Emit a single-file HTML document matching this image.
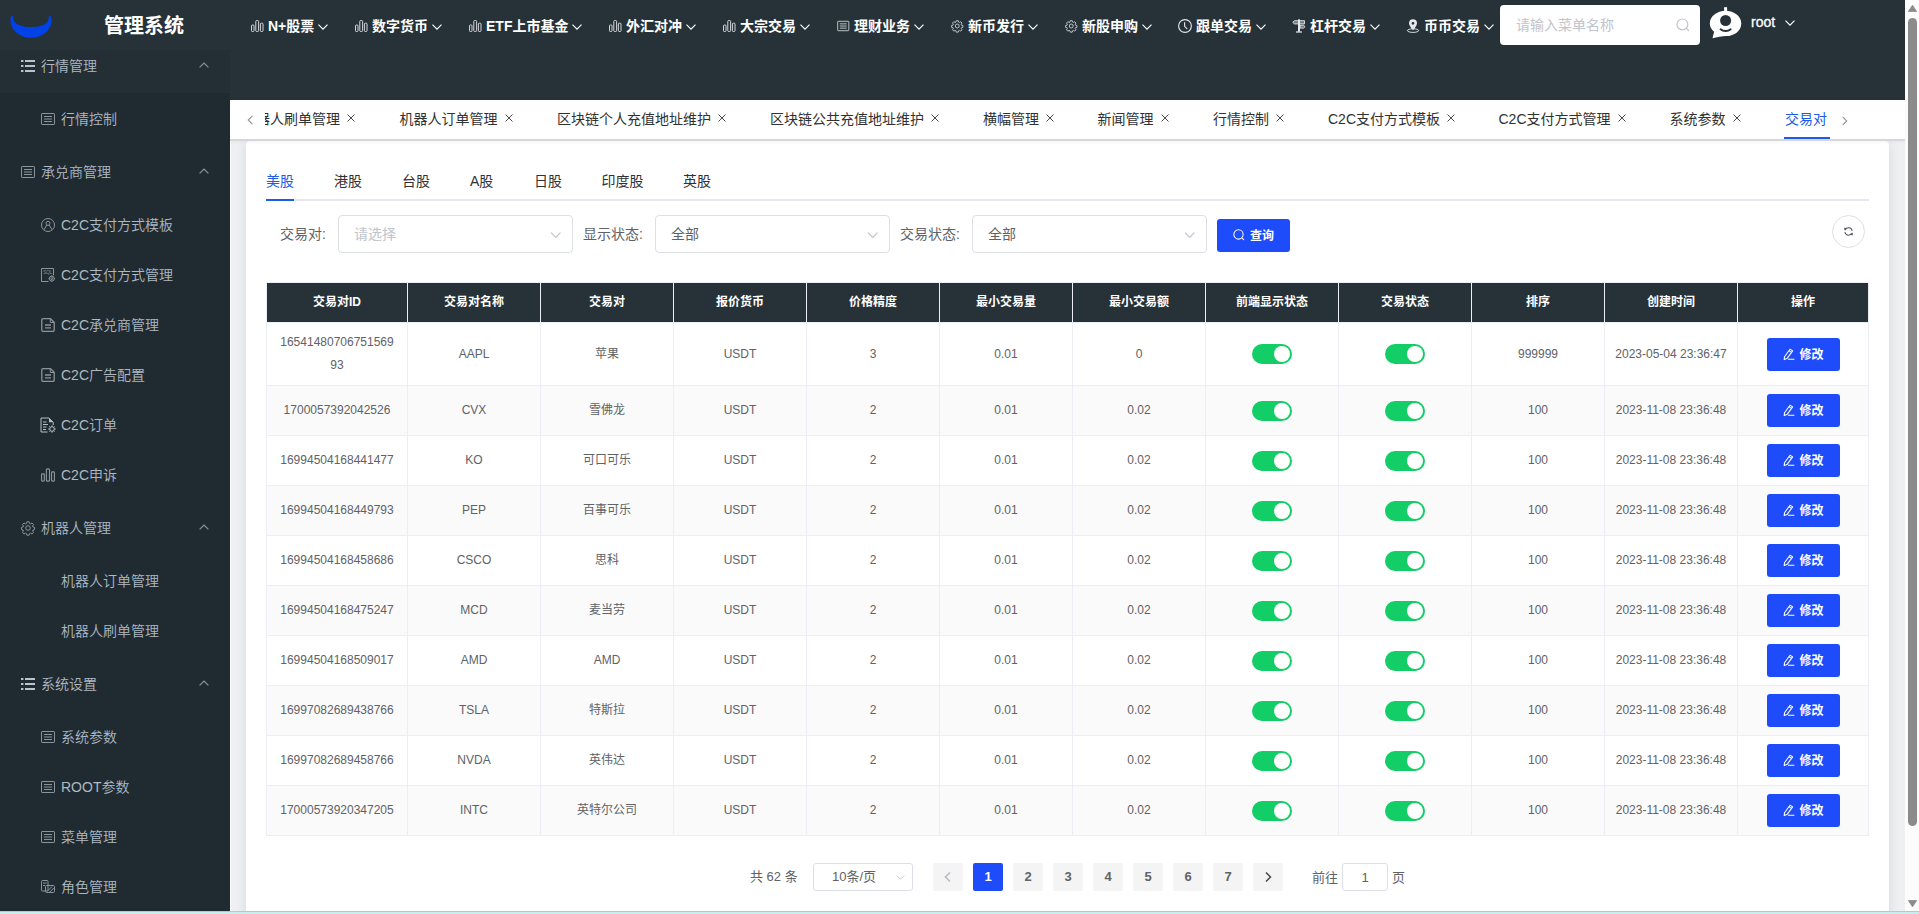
<!DOCTYPE html>
<html lang="zh-CN"><head><meta charset="utf-8"><title>管理系统</title>
<style>
*{box-sizing:border-box;margin:0;padding:0}
html,body{width:1919px;height:914px;overflow:hidden;background:#fff}
body{font-family:"Liberation Sans","Noto Sans CJK SC",sans-serif;font-size:14px;color:#606266;position:relative}
svg{display:block;overflow:visible}
.abs{position:absolute}
#hdr{position:absolute;left:0;top:0;width:1905px;height:100px;background:#263238}
#logo{position:absolute;left:0;top:0;width:230px;height:50px;background:#263238;z-index:5}
#logo .t{position:absolute;left:104px;top:12px;font-size:20px;font-weight:700;color:#fff;line-height:28px;white-space:nowrap}
.nav{position:absolute;top:0;height:52px;white-space:nowrap;color:#fff;font-size:14px;font-weight:700;line-height:52px}
.nav .ic{position:absolute;left:.5px;top:20px;width:12.500px;height:12px;color:#d4d8dc}
.nav .ic.big{left:0;top:19px;width:14px;height:14px;color:#e6e9ec}
.nav .tx{position:absolute;left:18px;top:0}
.nav .ar{display:inline-block;vertical-align:middle;margin-left:4px;width:10px;height:6px;margin-top:-1px}
#search{position:absolute;left:1500px;top:5px;width:200px;height:40px;background:#fff;border-radius:4px}
#search span{position:absolute;left:16px;top:0;line-height:40px;font-size:14px;color:#c0c4cc}
#side{position:absolute;left:0;top:50px;width:230px;height:861px;background:#202b31;overflow:hidden;font-weight:350}
#side .in{position:absolute;left:0;top:-12px;width:230px}
.grp{position:relative;width:230px;height:56px;color:#aeb9c4;font-size:14px;line-height:56px}
.grp .tx{position:absolute;left:41px;top:0;white-space:nowrap}
.grp .ic{position:absolute;left:21px;top:21px;width:14px;height:14px}
.grp .ar{position:absolute;left:199px;top:24px;width:10px;height:6px;color:#8a949c}
.itm{position:relative;width:230px;height:50px;color:#aeb9c4;font-size:14px;line-height:50px}
.itm .tx{position:absolute;left:61px;top:0;white-space:nowrap}
.itm .ic{position:absolute;left:41px;top:18px;width:14px;height:14px;color:#8a949c}
.itm .ic.big{left:40px;top:17px;width:16px;height:16px;color:#b4bec7}
#tabs{position:absolute;left:230px;top:100px;width:1675px;height:39px;background:#fff;box-shadow:0 2px 0 0 #d5d7db,0 4px 3px 0 rgba(0,0,0,.035);z-index:3}
#tabs .scroll{position:absolute;left:35px;top:0;width:1565px;height:39px;overflow:hidden}
.tab{position:absolute;top:0;height:39px;line-height:39px;font-size:14px;color:#303133;white-space:nowrap}
.tab .x{display:inline-block;vertical-align:middle;width:8px;height:8px;margin-left:7.300px;margin-top:-4px;color:#303133}
#main{position:absolute;left:231px;top:139px;width:1674px;height:772px;background:#eef0f2;overflow:hidden}
#card{position:absolute;left:15px;top:2px;width:1643px;height:800px;background:#fff;border-radius:4px;box-shadow:0 2px 12px 0 rgba(0,0,0,.1)}
.itab{position:absolute;top:20px;height:40px;line-height:40px;font-size:14px;color:#303133;white-space:nowrap}
.flabel{position:absolute;top:74px;height:38px;line-height:39px;font-size:14px;color:#606266;white-space:nowrap}
.sel{position:absolute;top:74px;width:235px;height:38px;border:1px solid #dcdfe6;border-radius:4px;background:#fff;font-size:14px;line-height:37px;padding-left:15px;color:#606266}
.sel .ar{position:absolute;right:11px;top:16px;width:11.500px;height:6.300px;color:#c0c4cc}
table{position:absolute;left:20px;top:141px;border-collapse:separate;border-spacing:0;table-layout:fixed;width:1602px;border-left:1px solid #ebeef5;border-top:1px solid #ebeef5;font-size:12px;color:#606266}
th{height:40px;background:#263238;color:#fff;font-weight:700;font-size:12px;text-align:center;border-right:1px solid #ebeef5;border-bottom:1px solid #ebeef5;line-height:23px;padding:0}
td{height:50px;text-align:center;border-right:1px solid #ebeef5;border-bottom:1px solid #ebeef5;line-height:23px;padding:0 10px;vertical-align:middle}
tr.r1 td{height:63px}
tr.s td{background:#fafafa}
.sw{display:inline-block;vertical-align:middle;width:40px;height:20px;border-radius:10px;background:#13ce66;position:relative}
.sw:after{content:"";position:absolute;left:22px;top:2px;width:16px;height:16px;border-radius:50%;background:#fff}
.btn{display:inline-block;vertical-align:middle;width:73px;height:33px;border-radius:3px;background:#1e4cfa;color:#fff;font-size:12px;font-weight:700;line-height:33px;text-align:left;position:relative;white-space:nowrap}
.btn svg{position:absolute;left:16px;top:10px;width:12px;height:12px}
.btn span{position:absolute;left:33px;top:1px}
.pg{position:absolute;top:722px;width:30px;height:28px;border-radius:2px;background:#f4f4f5;color:#606266;font-size:13px;font-weight:700;line-height:28px;text-align:center}
.pg svg{position:absolute;left:10px;top:8px;width:10px;height:12px}
.pt{position:absolute;top:722px;height:28px;line-height:28px;font-size:13px;color:#606266;white-space:nowrap}
</style></head>
<body>
<div id="hdr">
<div class="nav" style="left:250px"><svg class="ic" viewBox="0 0 12.5 12"><g fill="none" stroke="currentColor" stroke-width="1"><rect x=".5" y="5" width="2.500" height="6.500" rx=".8"/><rect x="4.800" y=".5" width="2.800" height="11" rx=".9"/><rect x="9.400" y="3.200" width="2.600" height="8.300" rx=".8"/></g></svg><span class="tx">N+股票<svg class="ar" viewBox="0 0 10 6"><path d="M.5 .6l4.500 4.500 4.500-4.500" fill="none" stroke="currentColor" stroke-width="1.150"/></svg></span></div>
<div class="nav" style="left:354px"><svg class="ic" viewBox="0 0 12.5 12"><g fill="none" stroke="currentColor" stroke-width="1"><rect x=".5" y="5" width="2.500" height="6.500" rx=".8"/><rect x="4.800" y=".5" width="2.800" height="11" rx=".9"/><rect x="9.400" y="3.200" width="2.600" height="8.300" rx=".8"/></g></svg><span class="tx">数字货币<svg class="ar" viewBox="0 0 10 6"><path d="M.5 .6l4.500 4.500 4.500-4.500" fill="none" stroke="currentColor" stroke-width="1.150"/></svg></span></div>
<div class="nav" style="left:468px"><svg class="ic" viewBox="0 0 12.5 12"><g fill="none" stroke="currentColor" stroke-width="1"><rect x=".5" y="5" width="2.500" height="6.500" rx=".8"/><rect x="4.800" y=".5" width="2.800" height="11" rx=".9"/><rect x="9.400" y="3.200" width="2.600" height="8.300" rx=".8"/></g></svg><span class="tx">ETF上市基金<svg class="ar" viewBox="0 0 10 6"><path d="M.5 .6l4.500 4.500 4.500-4.500" fill="none" stroke="currentColor" stroke-width="1.150"/></svg></span></div>
<div class="nav" style="left:608px"><svg class="ic" viewBox="0 0 12.5 12"><g fill="none" stroke="currentColor" stroke-width="1"><rect x=".5" y="5" width="2.500" height="6.500" rx=".8"/><rect x="4.800" y=".5" width="2.800" height="11" rx=".9"/><rect x="9.400" y="3.200" width="2.600" height="8.300" rx=".8"/></g></svg><span class="tx">外汇对冲<svg class="ar" viewBox="0 0 10 6"><path d="M.5 .6l4.500 4.500 4.500-4.500" fill="none" stroke="currentColor" stroke-width="1.150"/></svg></span></div>
<div class="nav" style="left:722px"><svg class="ic" viewBox="0 0 12.5 12"><g fill="none" stroke="currentColor" stroke-width="1"><rect x=".5" y="5" width="2.500" height="6.500" rx=".8"/><rect x="4.800" y=".5" width="2.800" height="11" rx=".9"/><rect x="9.400" y="3.200" width="2.600" height="8.300" rx=".8"/></g></svg><span class="tx">大宗交易<svg class="ar" viewBox="0 0 10 6"><path d="M.5 .6l4.500 4.500 4.500-4.500" fill="none" stroke="currentColor" stroke-width="1.150"/></svg></span></div>
<div class="nav" style="left:836px"><svg class="ic" viewBox="0 0 14 14"><g fill="none" stroke="currentColor" stroke-width="1"><rect x=".5" y="1.5" width="13" height="11" rx=".6"/><path d="M3 4.5h8M3 7h8M3 9.5h8"/></g></svg><span class="tx">理财业务<svg class="ar" viewBox="0 0 10 6"><path d="M.5 .6l4.500 4.500 4.500-4.500" fill="none" stroke="currentColor" stroke-width="1.150"/></svg></span></div>
<div class="nav" style="left:950px"><svg class="ic" viewBox="0 0 14 14"><g fill="none" stroke="currentColor" stroke-width="1"><circle cx="7" cy="7" r="2.3"/><path d="M5.9 .8h2.2l.4 1.6 1 .5 1.500-.9 1.500 1.600-.9 1.400.4 1 1.600.4v2.200l-1.600.4-.4 1 .9 1.400-1.500 1.600-1.500-.9-1 .5-.4 1.600h-2.200l-.4-1.600-1-.5-1.500.9-1.500-1.600.9-1.400-.4-1-1.600-.4v-2.200l1.600-.4.4-1-.9-1.400 1.500-1.600 1.500.9 1-.5z"/></g></svg><span class="tx">新币发行<svg class="ar" viewBox="0 0 10 6"><path d="M.5 .6l4.500 4.500 4.500-4.500" fill="none" stroke="currentColor" stroke-width="1.150"/></svg></span></div>
<div class="nav" style="left:1064px"><svg class="ic" viewBox="0 0 14 14"><g fill="none" stroke="currentColor" stroke-width="1"><circle cx="7" cy="7" r="2.3"/><path d="M5.9 .8h2.2l.4 1.6 1 .5 1.500-.9 1.500 1.600-.9 1.400.4 1 1.600.4v2.200l-1.600.4-.4 1 .9 1.400-1.500 1.600-1.500-.9-1 .5-.4 1.600h-2.200l-.4-1.600-1-.5-1.500.9-1.500-1.600.9-1.400-.4-1-1.600-.4v-2.200l1.600-.4.4-1-.9-1.400 1.500-1.600 1.500.9 1-.5z"/></g></svg><span class="tx">新股申购<svg class="ar" viewBox="0 0 10 6"><path d="M.5 .6l4.500 4.500 4.500-4.500" fill="none" stroke="currentColor" stroke-width="1.150"/></svg></span></div>
<div class="nav" style="left:1178px"><svg class="ic big" viewBox="0 0 14 14"><g fill="none" stroke="currentColor" stroke-width="1.1"><circle cx="7" cy="7" r="6.4"/><path d="M6.600 3.500v3.800l2.300 2.300" stroke-linecap="round"/></g></svg><span class="tx">跟单交易<svg class="ar" viewBox="0 0 10 6"><path d="M.5 .6l4.500 4.500 4.500-4.500" fill="none" stroke="currentColor" stroke-width="1.150"/></svg></span></div>
<div class="nav" style="left:1292px"><svg class="ic big" viewBox="0 0 14 14"><rect x="6" y=".3" width="2" height="12.400" fill="currentColor"/><path d="M4 13h6" stroke="currentColor" stroke-width="1.200" fill="none"/><path d="M2.500 1.700h10v3.200h-10l-1.800-1.600z" fill="currentColor" fill-opacity=".4" stroke="currentColor" stroke-width=".9"/><path d="M8 6.300h3.600l1.500 1.400-1.500 1.400h-3.600z" fill="currentColor" fill-opacity=".4" stroke="currentColor" stroke-width=".9"/></svg><span class="tx">杠杆交易<svg class="ar" viewBox="0 0 10 6"><path d="M.5 .6l4.500 4.500 4.500-4.500" fill="none" stroke="currentColor" stroke-width="1.150"/></svg></span></div>
<div class="nav" style="left:1406px"><svg class="ic big" viewBox="0 0 14 14"><path d="M7 .3a4 4 0 0 0-4 4c0 2.600 4 7 4 7s4-4.400 4-7a4 4 0 0 0-4-4zm0 2.600a1.400 1.400 0 1 1 0 2.800 1.400 1.400 0 0 1 0-2.800z" fill="currentColor" fill-rule="evenodd"/><ellipse cx="7" cy="11.600" rx="5.600" ry="1.800" fill="none" stroke="currentColor" stroke-width=".9"/></svg><span class="tx">币币交易<svg class="ar" viewBox="0 0 10 6"><path d="M.5 .6l4.500 4.500 4.500-4.500" fill="none" stroke="currentColor" stroke-width="1.150"/></svg></span></div>
<div id="search"><span>请输入菜单名称</span><svg style="position:absolute;left:176px;top:13px;width:14px;height:14px;color:#c0c4cc" viewBox="0 0 14 14"><g fill="none" stroke="currentColor" stroke-width="1.200"><circle cx="6.400" cy="6.400" r="5.400"/><path d="M10.300 10.300l2.200 2.200" stroke-linecap="round"/></g></svg></div>
<svg class="abs" style="left:1705px;top:4px;width:42px;height:38px" viewBox="0 0 42 38"><path d="M19.100 3.200h3v4.200h-3z" fill="#fff"/><path d="M20.600 6.800c8.700 0 15.700 5.600 15.700 12.600 0 7-6.600 12.500-15.200 12.700-3.700 .1-9.200 1.200-13.600 2.100l1.600-6.500c-2.700-2.200-4.300-5.100-4.300-8.300 0-7 7.100-12.600 15.800-12.600z" fill="#fff"/><circle cx="20.600" cy="16.500" r="5.500" fill="#263238"/><path d="M15.600 25.300c2.800 2.300 7.200 2.300 10 0" fill="none" stroke="#263238" stroke-width="2" stroke-linecap="round"/></svg>
<div class="abs" style="left:1751px;top:0;line-height:44px;font-size:14px;color:#fff;-webkit-text-stroke:.3px #fff">root</div>
<svg class="abs" style="left:1785px;top:20px;width:10px;height:6px;color:#fff" viewBox="0 0 10 6"><path d="M.5 .6l4.500 4.500 4.500-4.500" fill="none" stroke="currentColor" stroke-width="1.150"/></svg>
</div>
<div id="side"><div class="in">
<div class="grp" style="background:linear-gradient(#232e35,#232e35) no-repeat 0 0/100% 55px;"><svg class="ic" style="color:#b9c3cc" viewBox="0 0 14 14"><g fill="currentColor"><rect x="0" y="1" width="2.400" height="2"/><rect x="4" y="1" width="10" height="2"/><rect x="0" y="6" width="2.400" height="2"/><rect x="4" y="6" width="10" height="2"/><rect x="0" y="11" width="2.400" height="2"/><rect x="4" y="11" width="10" height="2"/></g></svg><span class="tx">行情管理</span><svg class="ar" viewBox="0 0 10 6"><path d="M.6 5.400l4.400-4.400 4.400 4.400" fill="none" stroke="currentColor" stroke-width="1.200"/></svg></div>
<div class="itm"><svg class="ic" viewBox="0 0 14 14"><g fill="none" stroke="currentColor" stroke-width="1"><rect x=".5" y="1.5" width="13" height="11" rx=".6"/><path d="M3 4.5h8M3 7h8M3 9.5h8"/></g></svg><span class="tx">行情控制</span></div>
<div class="grp" style=""><svg class="ic" style="color:#8a949c" viewBox="0 0 14 14"><g fill="none" stroke="currentColor" stroke-width="1"><rect x=".5" y="1.5" width="13" height="11" rx=".6"/><path d="M3 4.5h8M3 7h8M3 9.5h8"/></g></svg><span class="tx">承兑商管理</span><svg class="ar" viewBox="0 0 10 6"><path d="M.6 5.400l4.400-4.400 4.400 4.400" fill="none" stroke="currentColor" stroke-width="1.200"/></svg></div>
<div class="itm"><svg class="ic" viewBox="0 0 14 14"><g fill="none" stroke="currentColor" stroke-width="1"><circle cx="7" cy="7" r="6.500"/><circle cx="7" cy="5.300" r="2"/><path d="M3 11.800l2.800-4.800M11 11.800l-2.800-4.800"/></g></svg><span class="tx">C2C支付方式模板</span></div>
<div class="itm"><svg class="ic" viewBox="0 0 14 14"><g fill="none" stroke="currentColor" stroke-width="1"><path d="M7.500 13.500h-7v-13h12v6.800"/><circle cx="10.800" cy="10.600" r="2.500"/><circle cx="10.800" cy="10.600" r="1"/><path d="M10.800 7.300v1M10.800 12.900v1M7.500 10.600h1M13.100 10.600h1"/></g><text x="2.200" y="5.800" font-size="4.500" font-family="Liberation Sans,sans-serif" fill="currentColor">SQL</text></svg><span class="tx">C2C支付方式管理</span></div>
<div class="itm"><svg class="ic" viewBox="0 0 14 14"><g fill="none" stroke="currentColor" stroke-width="1.300"><path d="M9.500 .700h-7.500a1.200 1.200 0 0 0-1.200 1.200v10.200a1.200 1.200 0 0 0 1.200 1.200h10a1.200 1.200 0 0 0 1.200-1.200v-7.900z"/><path d="M9.300 .900v3.600h3.700" stroke-width="1"/><path d="M4 7h6M4 9.800h6"/></g></svg><span class="tx">C2C承兑商管理</span></div>
<div class="itm"><svg class="ic" viewBox="0 0 14 14"><g fill="none" stroke="currentColor" stroke-width="1.300"><path d="M9.500 .700h-7.500a1.200 1.200 0 0 0-1.200 1.200v10.200a1.200 1.200 0 0 0 1.200 1.200h10a1.200 1.200 0 0 0 1.200-1.200v-7.900z"/><path d="M9.300 .900v3.600h3.700" stroke-width="1"/><path d="M4 7h6M4 9.800h6"/></g></svg><span class="tx">C2C广告配置</span></div>
<div class="itm"><svg class="ic big" viewBox="0 0 16 16"><g fill="none" stroke="currentColor" stroke-width="1"><path d="M7.500 15h-6.500v-14h8l4.200 4.200v2.800"/><path d="M3 5h3.500M3 7.500h5M3 10h3.500M3 12.500h3"/><circle cx="12" cy="12" r="2.300"/><path d="M12 8.300v1.400M12 14.300v1.400M8.300 12h1.400M14.300 12h1.400M9.400 9.400l1 1M13.600 13.600l1 1M14.600 9.400l-1 1M10.400 13.600l-1 1"/></g><path d="M9 1l4.200 4.200h-4.200z" fill="currentColor"/></svg><span class="tx">C2C订单</span></div>
<div class="itm"><svg class="ic" viewBox="0 0 12.5 12"><g fill="none" stroke="currentColor" stroke-width="1"><rect x=".5" y="5" width="2.500" height="6.500" rx=".8"/><rect x="4.800" y=".5" width="2.800" height="11" rx=".9"/><rect x="9.400" y="3.200" width="2.600" height="8.300" rx=".8"/></g></svg><span class="tx">C2C申诉</span></div>
<div class="grp" style=""><svg class="ic" style="color:#8a949c" viewBox="0 0 14 14"><g fill="none" stroke="currentColor" stroke-width="1"><circle cx="7" cy="7" r="2.3"/><path d="M5.9 .8h2.2l.4 1.6 1 .5 1.500-.9 1.500 1.600-.9 1.400.4 1 1.600.4v2.200l-1.600.4-.4 1 .9 1.400-1.500 1.600-1.500-.9-1 .5-.4 1.600h-2.200l-.4-1.600-1-.5-1.500.9-1.500-1.600.9-1.400-.4-1-1.600-.4v-2.200l1.600-.4.4-1-.9-1.400 1.500-1.600 1.500.9 1-.5z"/></g></svg><span class="tx">机器人管理</span><svg class="ar" viewBox="0 0 10 6"><path d="M.6 5.400l4.400-4.400 4.400 4.400" fill="none" stroke="currentColor" stroke-width="1.200"/></svg></div>
<div class="itm"><span class="tx">机器人订单管理</span></div>
<div class="itm"><span class="tx">机器人刷单管理</span></div>
<div class="grp" style=""><svg class="ic" style="color:#b9c3cc" viewBox="0 0 14 14"><g fill="currentColor"><rect x="0" y="1" width="2.400" height="2"/><rect x="4" y="1" width="10" height="2"/><rect x="0" y="6" width="2.400" height="2"/><rect x="4" y="6" width="10" height="2"/><rect x="0" y="11" width="2.400" height="2"/><rect x="4" y="11" width="10" height="2"/></g></svg><span class="tx">系统设置</span><svg class="ar" viewBox="0 0 10 6"><path d="M.6 5.400l4.400-4.400 4.400 4.400" fill="none" stroke="currentColor" stroke-width="1.200"/></svg></div>
<div class="itm"><svg class="ic" viewBox="0 0 14 14"><g fill="none" stroke="currentColor" stroke-width="1"><rect x=".5" y="1.5" width="13" height="11" rx=".6"/><path d="M3 4.5h8M3 7h8M3 9.5h8"/></g></svg><span class="tx">系统参数</span></div>
<div class="itm"><svg class="ic" viewBox="0 0 14 14"><g fill="none" stroke="currentColor" stroke-width="1"><rect x=".5" y="1.5" width="13" height="11" rx=".6"/><path d="M3 4.5h8M3 7h8M3 9.5h8"/></g></svg><span class="tx">ROOT参数</span></div>
<div class="itm"><svg class="ic" viewBox="0 0 14 14"><g fill="none" stroke="currentColor" stroke-width="1"><rect x=".5" y="1.5" width="13" height="11" rx=".6"/><path d="M3 4.5h8M3 7h8M3 9.5h8"/></g></svg><span class="tx">菜单管理</span></div>
<div class="itm"><svg class="ic" viewBox="0 0 14 14"><g fill="none" stroke="currentColor" stroke-width="1"><rect x=".5" y=".5" width="6.500" height="10.500" rx="1"/><path d="M2 3h3.500M2 5.500h2"/><rect x="4.500" y="5.500" width="9" height="7" rx="1.200"/><path d="M6 11.500l5-5M8.500 12.300l4.500-4.500"/></g></svg><span class="tx">角色管理</span></div>
</div></div>
<div id="logo"><svg class="abs" style="left:10px;top:14px;width:42px;height:25px" viewBox="0 0 42 25"><path d="M1.900 1.600C.9 2.600 .3 4.500 .4 7C.8 16 9.500 23.800 21 23.800C32.500 23.800 41.200 16 41.600 7C41.700 4.500 41.100 2.600 40.100 1.600C39.300 1.800 38.800 2.200 38.600 2.800C38.900 4 38.700 5.500 38 7C35.500 11 29 13 21 13C13 13 6.500 11 4 7C3.300 5.500 3.100 4 3.400 2.800C3.200 2.200 2.700 1.800 1.900 1.600Z" fill="#0042e8"/></svg><div class="t">管理系统</div></div>
<div id="tabs">
<svg class="abs" style="left:16px;top:14px;width:9px;height:12px;color:#909399;stroke-width:1.2" viewBox="0 0 10 12"><path d="M7 1.500l-4.500 4.500 4.500 4.500" fill="none" stroke="currentColor"/></svg>
<div class="scroll">
<div class="tab" style="left:-23px">机器人刷单管理<svg class="x" viewBox="0 0 9 9"><path d="M.6 .6l7.800 7.800M8.400 .6l-7.800 7.800" fill="none" stroke="currentColor" stroke-width="1"/></svg></div>
<div class="tab" style="left:134.5px">机器人订单管理<svg class="x" viewBox="0 0 9 9"><path d="M.6 .6l7.800 7.800M8.400 .6l-7.800 7.800" fill="none" stroke="currentColor" stroke-width="1"/></svg></div>
<div class="tab" style="left:292px">区块链个人充值地址维护<svg class="x" viewBox="0 0 9 9"><path d="M.6 .6l7.800 7.800M8.400 .6l-7.800 7.800" fill="none" stroke="currentColor" stroke-width="1"/></svg></div>
<div class="tab" style="left:505px">区块链公共充值地址维护<svg class="x" viewBox="0 0 9 9"><path d="M.6 .6l7.800 7.800M8.400 .6l-7.800 7.800" fill="none" stroke="currentColor" stroke-width="1"/></svg></div>
<div class="tab" style="left:718px">横幅管理<svg class="x" viewBox="0 0 9 9"><path d="M.6 .6l7.800 7.800M8.400 .6l-7.800 7.800" fill="none" stroke="currentColor" stroke-width="1"/></svg></div>
<div class="tab" style="left:832.5px">新闻管理<svg class="x" viewBox="0 0 9 9"><path d="M.6 .6l7.800 7.800M8.400 .6l-7.800 7.800" fill="none" stroke="currentColor" stroke-width="1"/></svg></div>
<div class="tab" style="left:948px">行情控制<svg class="x" viewBox="0 0 9 9"><path d="M.6 .6l7.800 7.800M8.400 .6l-7.800 7.800" fill="none" stroke="currentColor" stroke-width="1"/></svg></div>
<div class="tab" style="left:1063px">C2C支付方式模板<svg class="x" viewBox="0 0 9 9"><path d="M.6 .6l7.800 7.800M8.400 .6l-7.800 7.800" fill="none" stroke="currentColor" stroke-width="1"/></svg></div>
<div class="tab" style="left:1233.5px">C2C支付方式管理<svg class="x" viewBox="0 0 9 9"><path d="M.6 .6l7.800 7.800M8.400 .6l-7.800 7.800" fill="none" stroke="currentColor" stroke-width="1"/></svg></div>
<div class="tab" style="left:1404.5px">系统参数<svg class="x" viewBox="0 0 9 9"><path d="M.6 .6l7.800 7.800M8.400 .6l-7.800 7.800" fill="none" stroke="currentColor" stroke-width="1"/></svg></div>
<div class="tab" style="left:1520px;color:#2059e8">交易对</div>
<div class="abs" style="left:1519px;top:37px;width:46px;height:2px;background:#1f5ae8"></div>
</div>
<svg class="abs" style="left:1610px;top:15px;width:9px;height:12px;color:#909399;stroke-width:1.2" viewBox="0 0 10 12"><path d="M3 1.500l4.500 4.500-4.500 4.500" fill="none" stroke="currentColor"/></svg>
</div>
<div id="main"><div id="card">
<div class="itab" style="left:20px;color:#2059e8">美股</div>
<div class="itab" style="left:88px">港股</div>
<div class="itab" style="left:156px">台股</div>
<div class="itab" style="left:224px">A股</div>
<div class="itab" style="left:288px">日股</div>
<div class="itab" style="left:355.5px">印度股</div>
<div class="itab" style="left:437px">英股</div>
<div class="abs" style="left:20px;top:58px;width:1603px;height:2px;background:#e4e7ed"></div>
<div class="abs" style="left:20px;top:58px;width:28px;height:2px;background:#1f5ae8"></div>
<div class="flabel" style="left:34px">交易对:</div>
<div class="sel" style="left:92px;color:#c0c4cc">请选择<svg class="ar" viewBox="0 0 10 6"><path d="M.5 .6l4.500 4.500 4.500-4.500" fill="none" stroke="currentColor" stroke-width="1.150"/></svg></div>
<div class="flabel" style="left:337px">显示状态:</div>
<div class="sel" style="left:409px">全部<svg class="ar" viewBox="0 0 10 6"><path d="M.5 .6l4.500 4.500 4.500-4.500" fill="none" stroke="currentColor" stroke-width="1.150"/></svg></div>
<div class="flabel" style="left:654px">交易状态:</div>
<div class="sel" style="left:726px">全部<svg class="ar" viewBox="0 0 10 6"><path d="M.5 .6l4.500 4.500 4.500-4.500" fill="none" stroke="currentColor" stroke-width="1.150"/></svg></div>
<div class="abs" style="left:971px;top:78px;width:73px;height:33px;border-radius:3px;background:#1e4cfa;color:#fff;font-size:12px;font-weight:700;line-height:34px"><svg class="abs" style="left:16px;top:10px;width:12px;height:12px;color:#fff" viewBox="0 0 14 14"><g fill="none" stroke="currentColor" stroke-width="1.200"><circle cx="6.400" cy="6.400" r="5.400"/><path d="M10.300 10.300l2.200 2.200" stroke-linecap="round"/></g></svg><span class="abs" style="left:33px;top:0;white-space:nowrap">查询</span></div>
<div class="abs" style="left:1586px;top:74px;width:33px;height:33px;border-radius:50%;border:1px solid #dcdfe6"><svg class="abs" style="left:10px;top:9.500px;width:11px;height:11px;color:#55585e" viewBox="0 0 12 12"><g fill="none" stroke="currentColor" stroke-width="1.100"><path d="M2.300 4.300A4.100 4.100 0 0 1 10 5.300"/><path d="M9.700 7.700A4.100 4.100 0 0 1 2 6.700"/></g><path d="M1.200 1.900l2.900 .4-2.500 2.500zM10.800 10.100l-2.900-.4 2.500-2.500z" fill="currentColor"/></svg></div>
<table><colgroup><col style="width:141px"><col style="width:133px"><col style="width:133px"><col style="width:133px"><col style="width:133px"><col style="width:133px"><col style="width:133px"><col style="width:133px"><col style="width:133px"><col style="width:133px"><col style="width:133px"><col style="width:131px"></colgroup><thead><tr><th>交易对ID</th><th>交易对名称</th><th>交易对</th><th>报价货币</th><th>价格精度</th><th>最小交易量</th><th>最小交易额</th><th>前端显示状态</th><th>交易状态</th><th>排序</th><th>创建时间</th><th>操作</th></tr></thead><tbody><tr class="r1"><td>16541480706751569<br>93</td><td>AAPL</td><td>苹果</td><td>USDT</td><td>3</td><td>0.01</td><td>0</td><td><span class="sw"></span></td><td><span class="sw"></span></td><td>999999</td><td>2023-05-04 23:36:47</td><td><span class="btn"><svg viewBox="0 0 12 12"><g fill="none" stroke="currentColor" stroke-width="1.050" stroke-linejoin="round"><path d="M7 1.200l2.700 1.700-5.800 7.700-2.700 1 .3-2.900z"/><path d="M5.900 2.700l2.700 1.700M5 11.300h6.400"/></g></svg><span>修改</span></span></td></tr><tr class="s"><td>1700057392042526</td><td>CVX</td><td>雪佛龙</td><td>USDT</td><td>2</td><td>0.01</td><td>0.02</td><td><span class="sw"></span></td><td><span class="sw"></span></td><td>100</td><td>2023-11-08 23:36:48</td><td><span class="btn"><svg viewBox="0 0 12 12"><g fill="none" stroke="currentColor" stroke-width="1.050" stroke-linejoin="round"><path d="M7 1.200l2.700 1.700-5.800 7.700-2.700 1 .3-2.900z"/><path d="M5.900 2.700l2.700 1.700M5 11.300h6.400"/></g></svg><span>修改</span></span></td></tr><tr class=""><td>16994504168441477</td><td>KO</td><td>可口可乐</td><td>USDT</td><td>2</td><td>0.01</td><td>0.02</td><td><span class="sw"></span></td><td><span class="sw"></span></td><td>100</td><td>2023-11-08 23:36:48</td><td><span class="btn"><svg viewBox="0 0 12 12"><g fill="none" stroke="currentColor" stroke-width="1.050" stroke-linejoin="round"><path d="M7 1.200l2.700 1.700-5.800 7.700-2.700 1 .3-2.900z"/><path d="M5.900 2.700l2.700 1.700M5 11.300h6.400"/></g></svg><span>修改</span></span></td></tr><tr class="s"><td>16994504168449793</td><td>PEP</td><td>百事可乐</td><td>USDT</td><td>2</td><td>0.01</td><td>0.02</td><td><span class="sw"></span></td><td><span class="sw"></span></td><td>100</td><td>2023-11-08 23:36:48</td><td><span class="btn"><svg viewBox="0 0 12 12"><g fill="none" stroke="currentColor" stroke-width="1.050" stroke-linejoin="round"><path d="M7 1.200l2.700 1.700-5.800 7.700-2.700 1 .3-2.900z"/><path d="M5.900 2.700l2.700 1.700M5 11.300h6.400"/></g></svg><span>修改</span></span></td></tr><tr class=""><td>16994504168458686</td><td>CSCO</td><td>思科</td><td>USDT</td><td>2</td><td>0.01</td><td>0.02</td><td><span class="sw"></span></td><td><span class="sw"></span></td><td>100</td><td>2023-11-08 23:36:48</td><td><span class="btn"><svg viewBox="0 0 12 12"><g fill="none" stroke="currentColor" stroke-width="1.050" stroke-linejoin="round"><path d="M7 1.200l2.700 1.700-5.800 7.700-2.700 1 .3-2.900z"/><path d="M5.900 2.700l2.700 1.700M5 11.300h6.400"/></g></svg><span>修改</span></span></td></tr><tr class="s"><td>16994504168475247</td><td>MCD</td><td>麦当劳</td><td>USDT</td><td>2</td><td>0.01</td><td>0.02</td><td><span class="sw"></span></td><td><span class="sw"></span></td><td>100</td><td>2023-11-08 23:36:48</td><td><span class="btn"><svg viewBox="0 0 12 12"><g fill="none" stroke="currentColor" stroke-width="1.050" stroke-linejoin="round"><path d="M7 1.200l2.700 1.700-5.800 7.700-2.700 1 .3-2.900z"/><path d="M5.900 2.700l2.700 1.700M5 11.300h6.400"/></g></svg><span>修改</span></span></td></tr><tr class=""><td>16994504168509017</td><td>AMD</td><td>AMD</td><td>USDT</td><td>2</td><td>0.01</td><td>0.02</td><td><span class="sw"></span></td><td><span class="sw"></span></td><td>100</td><td>2023-11-08 23:36:48</td><td><span class="btn"><svg viewBox="0 0 12 12"><g fill="none" stroke="currentColor" stroke-width="1.050" stroke-linejoin="round"><path d="M7 1.200l2.700 1.700-5.800 7.700-2.700 1 .3-2.900z"/><path d="M5.900 2.700l2.700 1.700M5 11.300h6.400"/></g></svg><span>修改</span></span></td></tr><tr class="s"><td>16997082689438766</td><td>TSLA</td><td>特斯拉</td><td>USDT</td><td>2</td><td>0.01</td><td>0.02</td><td><span class="sw"></span></td><td><span class="sw"></span></td><td>100</td><td>2023-11-08 23:36:48</td><td><span class="btn"><svg viewBox="0 0 12 12"><g fill="none" stroke="currentColor" stroke-width="1.050" stroke-linejoin="round"><path d="M7 1.200l2.700 1.700-5.800 7.700-2.700 1 .3-2.900z"/><path d="M5.900 2.700l2.700 1.700M5 11.300h6.400"/></g></svg><span>修改</span></span></td></tr><tr class=""><td>16997082689458766</td><td>NVDA</td><td>英伟达</td><td>USDT</td><td>2</td><td>0.01</td><td>0.02</td><td><span class="sw"></span></td><td><span class="sw"></span></td><td>100</td><td>2023-11-08 23:36:48</td><td><span class="btn"><svg viewBox="0 0 12 12"><g fill="none" stroke="currentColor" stroke-width="1.050" stroke-linejoin="round"><path d="M7 1.200l2.700 1.700-5.800 7.700-2.700 1 .3-2.900z"/><path d="M5.900 2.700l2.700 1.700M5 11.300h6.400"/></g></svg><span>修改</span></span></td></tr><tr class="s"><td>17000573920347205</td><td>INTC</td><td>英特尔公司</td><td>USDT</td><td>2</td><td>0.01</td><td>0.02</td><td><span class="sw"></span></td><td><span class="sw"></span></td><td>100</td><td>2023-11-08 23:36:48</td><td><span class="btn"><svg viewBox="0 0 12 12"><g fill="none" stroke="currentColor" stroke-width="1.050" stroke-linejoin="round"><path d="M7 1.200l2.700 1.700-5.800 7.700-2.700 1 .3-2.900z"/><path d="M5.900 2.700l2.700 1.700M5 11.300h6.400"/></g></svg><span>修改</span></span></td></tr></tbody></table>
<div class="pt" style="left:504px">共 62 条</div>
<div class="abs" style="left:567px;top:722px;width:100px;height:28px;border:1px solid #dcdfe6;border-radius:3px;font-size:13px;line-height:26px;color:#606266;padding-left:18px">10条/页<svg class="abs" style="left:82px;top:11px;width:9px;height:5px;color:#c0c4cc" viewBox="0 0 10 6"><path d="M.5 .6l4.500 4.500 4.500-4.500" fill="none" stroke="currentColor" stroke-width="1.150"/></svg></div>
<div class="pg" style="left:687px;color:#c0c4cc"><svg style="color:#b9bdc6;stroke-width:1.7" viewBox="0 0 10 12"><path d="M7 1.500l-4.500 4.500 4.500 4.500" fill="none" stroke="currentColor"/></svg></div>
<div class="pg" style="left:727px;background:#1e4cfa;color:#fff">1</div>
<div class="pg" style="left:767px">2</div>
<div class="pg" style="left:807px">3</div>
<div class="pg" style="left:847px">4</div>
<div class="pg" style="left:887px">5</div>
<div class="pg" style="left:927px">6</div>
<div class="pg" style="left:967px">7</div>
<div class="pg" style="left:1007px"><svg style="color:#45474c;stroke-width:1.5" viewBox="0 0 10 12"><path d="M3 1.500l4.500 4.500-4.500 4.500" fill="none" stroke="currentColor"/></svg></div>
<div class="pt" style="left:1066px;top:723px">前往</div>
<div class="abs" style="left:1096px;top:722px;width:46px;height:28px;border:1px solid #dcdfe6;border-radius:3px;font-size:13px;line-height:28px;color:#606266;text-align:center">1</div>
<div class="pt" style="left:1146px;top:723px">页</div>
</div></div>
<div class="abs" style="left:1905px;top:0;width:14px;height:911px;background:#fcfcfc"></div>
<svg class="abs" style="left:1905px;top:0;width:14px;height:911px" viewBox="0 0 14 911"><path d="M3.300 11.500l4.200-6.300 4.200 6.300z" fill="#8b8b8b" stroke="#8b8b8b" stroke-width=".8" stroke-linejoin="round"/><path d="M3.300 900.500l4.200 6.300 4.200-6.300z" fill="#8b8b8b" stroke="#8b8b8b" stroke-width=".8" stroke-linejoin="round"/></svg>
<div class="abs" style="left:1908px;top:18px;width:9px;height:808px;border-radius:5px;background:#8b8b8b"></div>
<div class="abs" style="left:0;top:911px;width:1919px;height:3px;background:#c9ecee;border-top:1px solid #b3c9ca"></div>
</body></html>
